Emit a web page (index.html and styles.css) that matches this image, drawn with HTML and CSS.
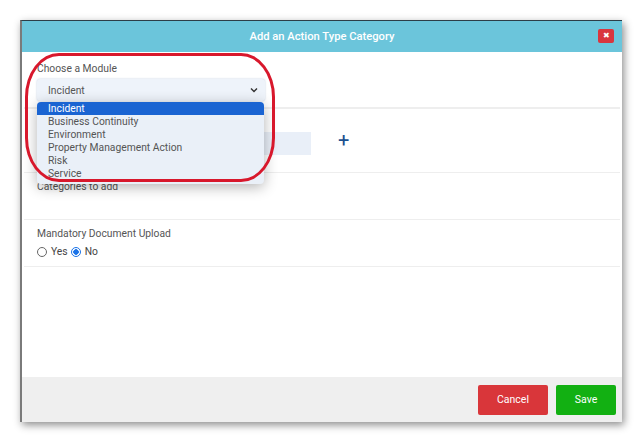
FILE: index.html
```html
<!DOCTYPE html>
<html lang="en">
<head>
    <meta charset="UTF-8">
    <title>Add an Action Type Category</title>
    <link rel="stylesheet" href="styles.css">
</head>
<body>
    <div class="dialog">
        <div class="dialog-header">
            <span class="dialog-title">Add an Action Type Category</span>
            <span class="close-btn">&#x2716;</span>
        </div>
        <div class="dialog-body">
            <!-- Module -->
            <div class="row row-module">
                <div class="label">Choose a Module</div>
                <div class="select">
                    <span>Incident</span>
                    <svg class="chevron" width="8" height="6" viewBox="0 0 8 6"><path d="M1 1.5 L4 4.5 L7 1.5" fill="none" stroke="#333" stroke-width="1.4"/></svg>
                </div>
            </div>
            <!-- Category -->
            <div class="row row-category">
                <div class="input"></div>
                <span class="plus">+</span>
            </div>
            <div class="row row-short">
                <div class="label">Categories to add</div>
            </div>
            <div class="row row-short">
                <div class="label">Mandatory Document Upload</div>
                <div class="radios">
                    <span class="radio"></span><span class="radio-text">Yes</span>
                    <span class="radio checked"></span><span class="radio-text">No</span>
                </div>
            </div>

            <!-- open dropdown list -->
            <ul class="dropdown">
                <li class="active">Incident</li>
                <li>Business Continuity</li>
                <li>Environment</li>
                <li>Property Management Action</li>
                <li>Risk</li>
                <li>Service</li>
            </ul>
            <div class="annotation"></div>
        </div>
        <div class="dialog-footer">
            <button class="btn btn-cancel">Cancel</button>
            <button class="btn btn-save">Save</button>
        </div>
    </div>
</body>
</html>
```

FILE: styles.css
```css
body {
    margin: 0;
    padding: 20px;
    background: #fff;
    font-family: Roboto, "Liberation Sans", Arial, sans-serif;
}
.dialog {
    width: 600px;
    height: 401px;
    display: flex;
    flex-direction: column;
    background: #fff;
    border-top: 1px solid #2c3e48;
    border-left: 2px solid #7a7a7a;
    box-shadow: 2px 3px 8px rgba(0, 0, 0, 0.45);
}
.dialog-header {
    height: 31px;
    background: #6bc5db;
    display: flex;
    align-items: center;
    justify-content: center;
    position: relative;
}
.dialog-title {
    color: #fff;
    font-size: 11.2px;
    font-weight: 500;
}
.close-btn {
    position: absolute;
    right: 8px;
    top: 8px;
    width: 16px;
    height: 14px;
    background: #d9363e;
    border-radius: 2px;
    color: #fff;
    font-size: 8px;
    line-height: 14px;
    text-align: center;
}
.dialog-body {
    flex: 1;
    position: relative;
    padding: 0 2px;
}
.row {
    border-bottom: 2px solid #eeeeee;
    padding-left: 13px;
}
.row-module {
    height: 57px;
    padding-top: 11px;
    box-sizing: border-box;
}
.label {
    font-size: 10.3px;
    color: #555;
    line-height: 12px;
}
.select {
    margin-top: 4px;
    width: 228px;
    height: 22px;
    box-sizing: border-box;
    background: #eef3fa;
    border-radius: 3px;
    box-shadow: 0 0 2px rgba(120, 150, 190, 0.5);
    display: flex;
    align-items: center;
    justify-content: space-between;
    padding: 0 7px 0 11px;
    font-size: 10.3px;
    color: #555;
}
.row-category {
    height: 64px;
    box-sizing: border-box;
    display: flex;
    align-items: center;
    padding-top: 5px;
    border-bottom-width: 1px;
}
.input {
    width: 274px;
    height: 23px;
    background: #e9eff8;
}
.plus {
    margin-left: 27px;
    color: #1c4f8e;
    font-size: 20px;
    line-height: 20px;
    margin-top: -6px;
}
.row-short {
    height: 47px;
    box-sizing: border-box;
    padding-top: 8px;
    border-bottom-width: 1px;
}
.radios {
    display: flex;
    align-items: center;
    margin-top: 5px;
    font-size: 10.3px;
    color: #444;
}
.radio {
    width: 10px;
    height: 10px;
    border: 1px solid #666;
    border-radius: 50%;
    box-sizing: border-box;
}
.radio.checked {
    border-color: #1a73e8;
    background: radial-gradient(circle, #1a73e8 0 2.5px, #fff 3px);
}
.radio-text {
    margin: 0 3px 0 4px;
}
.dropdown {
    position: absolute;
    left: 15px;
    top: 50px;
    width: 227px;
    margin: 0;
    padding: 0 0 4px 0;
    list-style: none;
    background: #eaf0f8;
    border-radius: 4px;
    box-shadow: 0 3px 14px rgba(0, 0, 0, 0.3);
    font-size: 10.3px;
    color: #555;
}
.dropdown li {
    height: 13px;
    line-height: 13px;
    padding-left: 11px;
}
.dropdown li.active {
    background: #1a64d2;
    color: #fff;
    border-radius: 4px 4px 0 0;
}
.annotation {
    position: absolute;
    left: 3px;
    top: 1px;
    width: 244px;
    height: 123px;
    border: 3px solid #d8182c;
    border-radius: 34px / 44px;
}
.dialog-footer {
    height: 45px;
    background: #efefef;
    display: flex;
    justify-content: flex-end;
    align-items: center;
    gap: 8px;
    padding-right: 6px;
}
.btn {
    height: 30px;
    border: none;
    border-radius: 2px;
    color: #fff;
    font-family: inherit;
    font-size: 10.5px;
}
.btn-cancel {
    width: 70px;
    background: #d9363a;
}
.btn-save {
    width: 60px;
    background: #12b012;
}
```
